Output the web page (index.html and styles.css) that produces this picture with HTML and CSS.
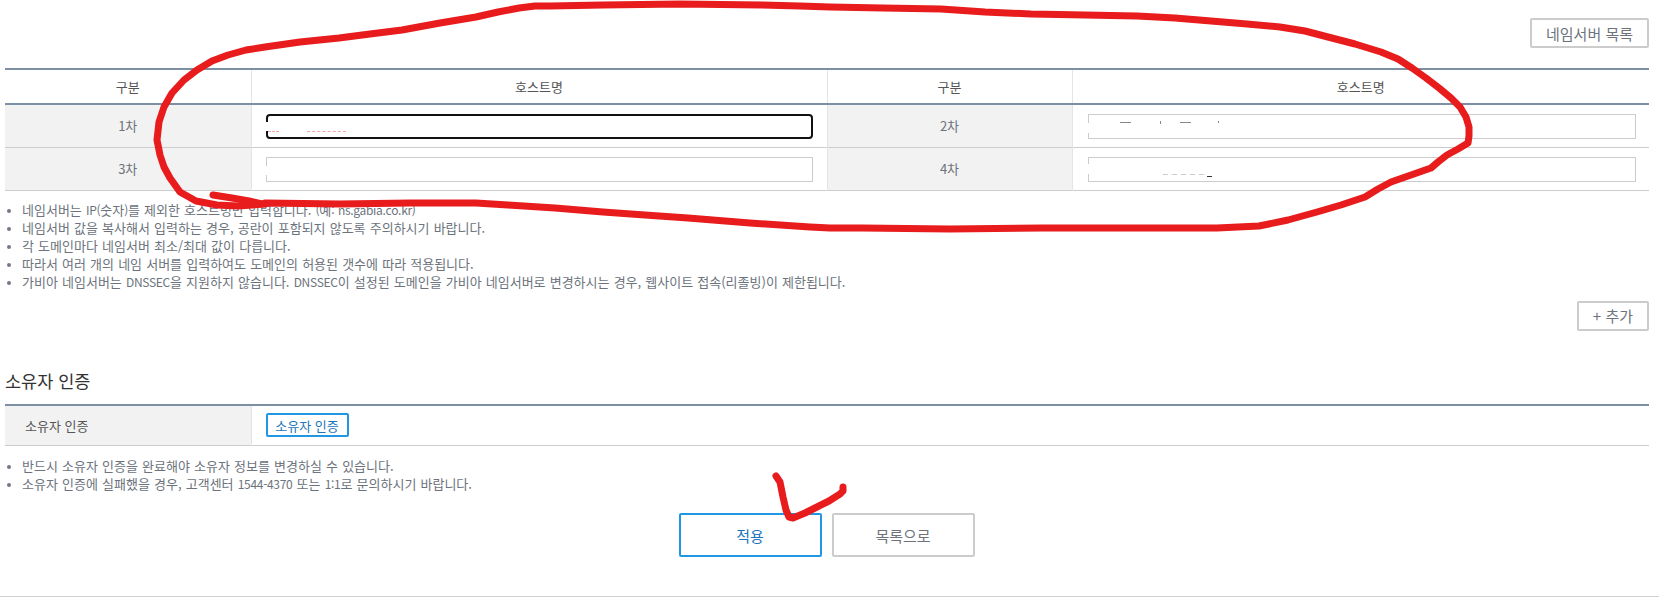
FILE: index.html
```html
<!DOCTYPE html>
<html lang="ko">
<head>
<meta charset="utf-8">
<title>네임서버 설정</title>
<link rel="stylesheet" href="styles.css">
</head>
<body>
<main class="page">
  <div class="top-actions"><button class="btn" type="button">네임서버 목록</button></div>
  <table class="grid ns-grid">
    <colgroup><col class="c-th"><col class="c-td"><col class="c-th2"><col class="c-td2"></colgroup>
    <thead>
      <tr><th>구분</th><th>호스트명</th><th>구분</th><th>호스트명</th></tr>
    </thead>
    <tbody>
      <tr>
        <td class="label">1차</td>
        <td class="field"><div class="input focus"><i class="gap gap-focus"></i><i class="dash d1"></i><i class="dash d2"></i></div></td>
        <td class="label">2차</td>
        <td class="field"><div class="input"><i class="gap gap-a"></i><i class="spot s1"></i><i class="spot s2"></i><i class="spot s3"></i><i class="spot s4"></i></div></td>
      </tr>
      <tr>
        <td class="label">3차</td>
        <td class="field"><div class="input"><i class="gap gap-b"></i></div></td>
        <td class="label">4차</td>
        <td class="field"><div class="input"><i class="gap gap-c"></i><i class="spot s5"></i><i class="spot s6"></i></div></td>
      </tr>
    </tbody>
  </table>
  <ul class="notes">
    <li>네임서버는 <span class="latin">IP(</span>숫자<span class="latin">)</span>를 제외한 호스트명만 입력합니다. <span class="latin">(</span>예<span class="latin">: ns.gabia.co.kr)</span></li>
    <li>네임서버 값을 복사해서 입력하는 경우, 공란이 포함되지 않도록 주의하시기 바랍니다.</li>
    <li>각 도메인마다 네임서버 최소/최대 값이 다릅니다.</li>
    <li>따라서 여러 개의 네임 서버를 입력하여도 도메인의 허용된 갯수에 따라 적용됩니다.</li>
    <li>가비아 네임서버는 <span class="latin">DNSSEC</span>을 지원하지 않습니다. <span class="latin">DNSSEC</span>이 설정된 도메인을 가비아 네임서버로 변경하시는 경우, 웹사이트 접속(리졸빙)이 제한됩니다.</li>
  </ul>
  <div class="add-row"><button class="btn" type="button">+ 추가</button></div>
  <h2 class="section-title">소유자 인증</h2>
  <table class="grid owner-grid">
    <colgroup><col class="c-th"><col></colgroup>
    <tbody>
      <tr>
        <td class="label label-left">소유자 인증</td>
        <td class="field-owner"><button class="btn-small" type="button">소유자 인증</button></td>
      </tr>
    </tbody>
  </table>
  <ul class="notes notes-owner">
    <li>반드시 소유자 인증을 완료해야 소유자 정보를 변경하실 수 있습니다.</li>
    <li>소유자 인증에 실패했을 경우, 고객센터 <span class="latin">1544-4370</span> 또는 <span class="latin">1:1</span>로 문의하시기 바랍니다.</li>
  </ul>
  <div class="actions">
    <button class="btn-large primary" type="button">적용</button>
    <button class="btn-large" type="button">목록으로</button>
  </div>
</main>
<div class="footer-line"></div>
<svg class="scribble" width="1659" height="607" viewBox="0 0 1659 607" aria-hidden="true">
  <polyline class="ink" points="265,204 238,206 217,205 196,201 180,192 170,178 164,167 160,155 157,140 159,122 164,107 172,93 184,80 197,70 212,61 228,55 246,50 265,47 300,42 339,38 370,34 402,30 440,23 476,17 498,12 519,8 535,6 550,6 603,5 680,4 762,5 800,6 830,7 883,8 941,9 985,12 1031,14 1085,15 1137,16 1175,18 1211,21 1247,24 1280,27 1305,31 1328,37 1355,44 1381,52 1398,59 1412,68 1426,78 1439,88 1451,98 1460,107 1466,117 1469,127 1469,136 1468,143 1458,149 1447,155 1438,162 1431,168 1411,175 1391,182 1378,189 1365,197 1341,205 1317,212 1288,220 1259,226 1217,228 1174,228 1108,228 1042,228 950,229 862,228 830,228 810,227 750,223 688,218 645,215 603,212 555,208 508,205 476,203 410,203 340,204 265,203"/>
  <polyline class="ink" points="213,195 232,198 249,201 262,204"/>
  <polyline class="ink" points="776,476 780,482 783,497 786,510 789,517 793,518 805,513 817,507 829,501 840,494 843,491 843,487"/>
</svg>
</body>
</html>
```

FILE: styles.css
```css
* { box-sizing: border-box; }
html, body { margin: 0; padding: 0; background: #fff; }
body {
  position: relative;
  height: 607px;
  overflow: hidden;
  font-family: "Noto Sans CJK KR", "Noto Sans", sans-serif;
  font-size: 13px;
  color: #6c737c;
}
.page { padding: 18px 10px 0 5px; }
.top-actions { display: flex; justify-content: flex-end; height: 50px; }
.btn {
  height: 30px;
  padding: 0 14px;
  background: #fff;
  border: 2px solid #ccc;
  border-radius: 2px;
  font: inherit;
  font-size: 15px;
  color: #6c737c;
}
.grid { width: 100%; border-collapse: collapse; table-layout: fixed; }
.ns-grid { border-top: 2px solid #7c8fa3; border-bottom: 1px solid #ccc; }
.c-th { width: 246px; }
.c-td { width: 576px; }
.c-th2 { width: 245px; }
.ns-grid th {
  height: 35px;
  padding: 0;
  font-weight: 400;
  color: #555;
  border-bottom: 2px solid #7c8fa3;
  border-left: 1px solid #e4e4e4;
}
.ns-grid th:first-child { border-left: 0; }
.ns-grid tbody td { height: 43px; padding: 0; border-top: 1px solid #ccc; border-left: 1px solid #e4e4e4; }
.ns-grid tbody tr:first-child td { border-top: 0; }
.ns-grid tbody td:first-child { border-left: 0; }
.label { background: #f2f2f2; text-align: center; color: #6c737c; }
.ns-grid .field { padding: 2px 14px 0; }
.ns-grid .field:last-child { padding: 2px 13px 0 15px; }
.ns-grid tbody tr:first-child .field { padding-top: 1px; }
.input { position: relative; height: 25px; background: #fff; border: 1px solid #ccc; }
.input.focus { border: 2px solid #111; border-radius: 4px; }
.gap, .spot, .dash { position: absolute; display: block; }
.gap { left: -2px; width: 3px; background: #fff; }
.gap-focus { top: 6px; height: 9px; }
.gap-a { top: 8px; height: 10px; }
.gap-b { top: 8px; height: 9px; }
.gap-c { top: 6px; height: 10px; }
.dash { height: 0; border-top: 1px dashed #f3a3a8; top: 15px; }
.d1 { left: 0; width: 11px; }
.d2 { left: 39px; width: 39px; }
.spot { height: 1px; background: #888; }
.s1 { left: 31px; top: 7px; width: 11px; }
.s2 { left: 71px; top: 6px; width: 1px; height: 3px; }
.s3 { left: 91px; top: 7px; width: 11px; }
.s4 { left: 129px; top: 6px; width: 1px; height: 2px; }
.s5 { left: 74px; top: 16px; width: 44px; background: repeating-linear-gradient(90deg, #ccc 0 5px, #fff 5px 9px); }
.s6 { left: 118px; top: 18px; width: 5px; background: #333; }
.notes { list-style: none; margin: 0; padding: 10px 0 0; line-height: 18px; word-spacing: 0.5px; }
.notes li { position: relative; padding-left: 17px; white-space: nowrap; }
.notes li::before {
  content: "";
  position: absolute;
  left: 2px;
  top: 8px;
  width: 4px;
  height: 4px;
  border-radius: 50%;
  background: #778;
}
.latin { font-size: 12px; letter-spacing: -0.3px; }
.add-row { display: flex; justify-content: flex-end; margin-top: 10px; }
.section-title { margin: 38px 0 0; font-size: 17.5px; font-weight: 400; line-height: 24px; color: #333; }
.owner-grid { margin-top: 11px; border-top: 2px solid #7c8fa3; border-bottom: 1px solid #ccc; }
.owner-grid td { height: 41px; padding: 0; }
.owner-grid .label-left { text-align: left; padding-left: 20px; border-right: 1px solid #e4e4e4; color: #555; }
.owner-grid .field-owner { padding-left: 14px; }
.btn-small {
  display: block;
  width: 83px;
  height: 24px;
  padding: 0;
  background: #fff;
  border: 2px solid #2196e3;
  border-radius: 2px;
  font: inherit;
  color: #1b75bb;
}
.notes-owner { padding-top: 11px; }
.actions { display: flex; justify-content: center; gap: 10px; margin: 20px 1px 0 0; }
.btn-large {
  width: 143px;
  height: 44px;
  padding: 0;
  background: #fff;
  border: 2px solid #ccc;
  border-radius: 2px;
  font: inherit;
  font-size: 15px;
  color: #6c737c;
}
.btn-large.primary { border-color: #2196e3; color: #1b75bb; }
.footer-line { position: absolute; left: 0; right: 0; top: 596px; height: 1px; background: #d0d0d0; }
.scribble { position: absolute; left: 0; top: 0; pointer-events: none; }
.ink { fill: none; stroke: #e81c1c; stroke-width: 7; stroke-linecap: round; stroke-linejoin: round; }
```
